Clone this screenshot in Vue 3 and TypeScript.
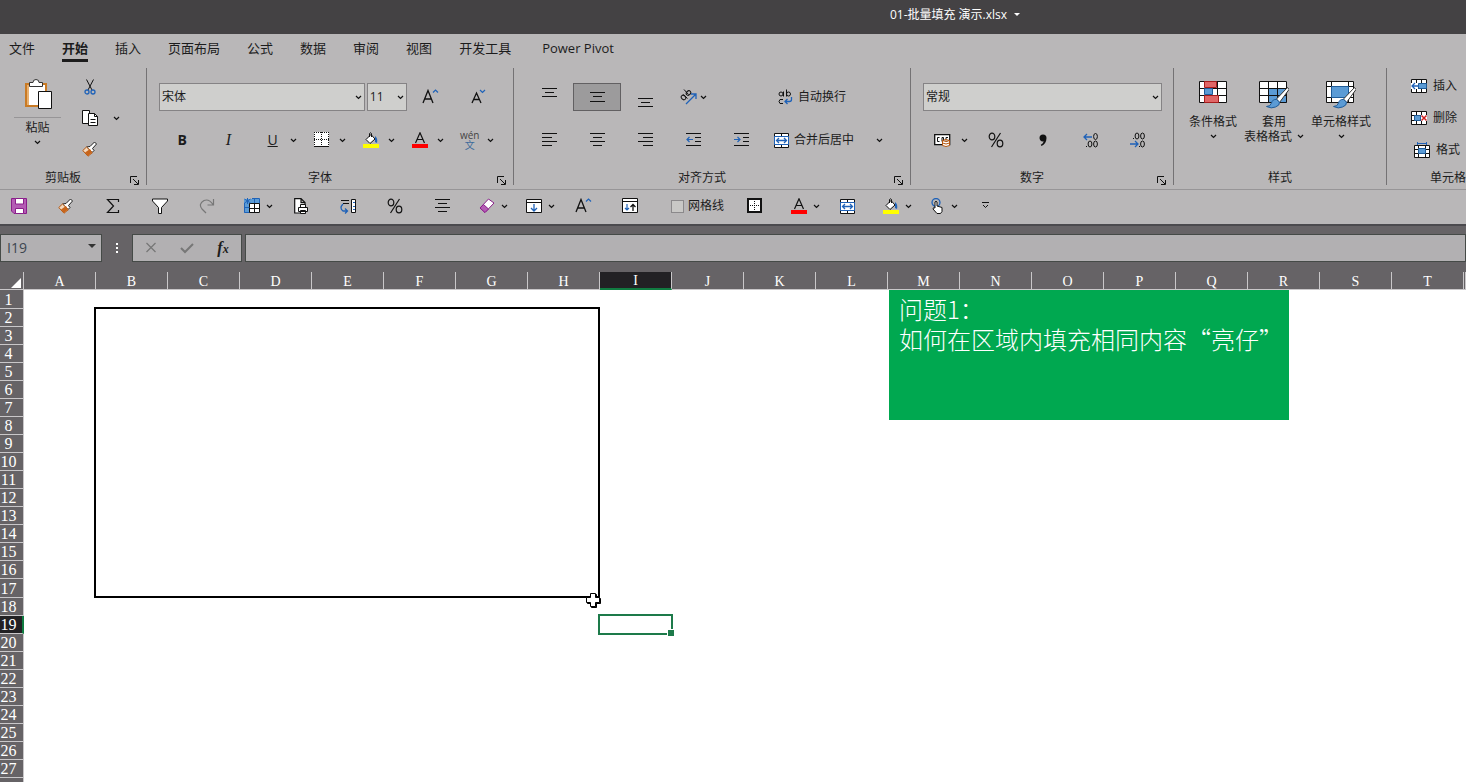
<script setup lang="ts">
import { computed, h, onBeforeUnmount, onMounted, ref } from 'vue'

interface Glyph { w: number; h: number; d: string }

const K = 'fill="none" stroke="#111"'
const B = 'fill="none" stroke="#1f62b8"'
const bars = (rows: number[][]): string =>
  rows.map(([x, y, w]) => `<path ${K} d="M${x} ${y}.5h${w}"/>`).join('')

const brush =
  `<path fill="#fff" stroke="#222" d="M8 5.5 12.5 1 14.5 3 10.5 7.5 12 9.5 10 11.5 4.5 6z"/><path fill="#f4d9bd" stroke="#b5560f" d="M4.5 6 .8 9.5 6 15.2 10.3 11.7z"/><path fill="#c8651b" d="M3 11.5 8 8l2 3.5L6 15z"/>`
const bucket =
  `<path fill="#fff" stroke="#111" d="M3 7.5 8 2.5 12 7 7 11.5z"/><path ${K} d="M6.5 5V1.5Q7.5 0 8.5 1.5V5"/><path fill="#1f62b8" d="M12 4q3 2 2 7l-2-1z"/><path fill="#ff0" d="M0 12h16v4H0z"/>`
const mergeIcon =
  `<path fill="#fff" stroke="#111" d="M.5.5h14v14H.5zM7.5.5v3M7.5 11.5v3"/><path fill="#fff" stroke="#1f62b8" d="M.5 3.5h14v8H.5z"/><path ${B} stroke-width="1.3" d="M2.5 7.5h10M5 5 2.5 7.5 5 10M10 5l2.5 2.5L10 10"/>`
const paintTip =
  `<path fill="#fff" stroke="#333" d="M28.500 6.500 17.500 18l3 3.500L30 8.500z"/><path fill="#5b9bd5" stroke="#1f5c99" d="M17.500 18.500q-4-.5-5 3.500-1 3.500-5 3.500 5 2.500 9 .5 4.500-1.500 4-5z"/>`
const grid28 = 'M.5.5h27v21H.5zM.5 7.5h27M.5 14.5h27M9.5.5v21M18.5.5v21'

const glyphs: Record<string, Glyph> = {
  chev: { w: 7, h: 5, d: `<path ${K} stroke-width="1.2" d="M1 1 3.500 3.500 6 1"/>` },
  launch: { w: 9, h: 9, d: `<path ${K} d="M.5 7V.5H7M3 3l5 5M8.500 4v4.500H4"/>` },
  paste: { w: 28, h: 31, d: `<path fill="#fff" stroke="#c97a24" stroke-width="2" d="M1 5h20v22H1z"/><path fill="#e8b070" d="M2 6h2v20H2z"/><path fill="#fff" stroke="#333" d="M4.500 7.500v-4H8a3 3 0 0 1 6 0h3.500v4z"/><path fill="#fff" stroke="#111" d="M13.500 12.500h13v17h-13z"/>` },
  cut: { w: 12, h: 16, d: `<path ${K} d="M2.500.5 8 11M9.500.5 4 11"/><circle cx="3" cy="13" r="2" ${B} stroke-width="1.300"/><circle cx="9" cy="13" r="2" ${B} stroke-width="1.300"/>` },
  copy: { w: 17, h: 17, d: `<path fill="#fff" stroke="#111" d="M.5.5h7v13h-7z"/><path fill="#fff" stroke="#111" d="M6.500 3.500h6l3 3v9h-9z"/><path ${K} d="M12.500 3.500v3h3M8.500 9.500h5M8.500 12.500h5"/>` },
  brush: { w: 16, h: 16, d: brush },
  borders: { w: 16, h: 16, d: `<path fill="#fff" d="M0 0h15v15H0z"/><path ${K} stroke-dasharray="1 1" d="M0 .5h15M0 7.500h15M.5 0v14M7.500 0v14M14.500 0v14"/><path ${K} d="M0 14.500h15"/>` },
  bucket: { w: 16, h: 16, d: bucket },
  fontcolor: { w: 16, h: 16, d: `<path ${K} stroke-width="1.200" d="M3.500 11 8 .8 12.500 11M5 7.500h6"/><path fill="#f00" d="M0 12h16v4H0z"/>` },
  grow: { w: 17, h: 16, d: `<path ${K} stroke-width="1.300" d="M1 14 6 1.500 11 14M3 10h6"/><path ${B} stroke-width="1.200" d="M11 3.500 13.500 1 16 3.500"/>` },
  shrink: { w: 15, h: 16, d: `<path ${K} stroke-width="1.300" d="M1 14 5.500 4 10 14M3 10.500h5"/><path ${B} stroke-width="1.200" d="M9 1 11.500 3.500 14 1"/>` },
  top: { w: 15, h: 20, d: bars([[0, 1, 15], [3, 5, 9], [0, 9, 15]]) },
  middle: { w: 15, h: 15, d: bars([[0, 2, 15], [3, 6, 9], [0, 11, 15]]) },
  bottom: { w: 15, h: 20, d: bars([[0, 11, 15], [3, 15, 9], [0, 19, 15]]) },
  left: { w: 15, h: 15, d: bars([[0, 0, 15], [0, 4, 10], [0, 8, 15], [0, 12, 10]]) },
  center: { w: 15, h: 15, d: bars([[0, 0, 15], [3, 4, 9], [0, 8, 15], [3, 12, 9]]) },
  right: { w: 15, h: 15, d: bars([[0, 0, 15], [5, 4, 10], [0, 8, 15], [5, 12, 10]]) },
  outdent: { w: 15, h: 15, d: bars([[0, 0, 15], [9, 4, 6], [9, 8, 6], [0, 12, 15]]) + `<path ${B} stroke-width="1.200" d="M7 6.500H1M3.500 4 1 6.500 3.500 9"/>` },
  indent: { w: 15, h: 15, d: bars([[0, 0, 15], [9, 4, 6], [9, 8, 6], [0, 12, 15]]) + `<path ${B} stroke-width="1.200" d="M0 6.500h6M3.500 4 6 6.500 3.500 9"/>` },
  orient: { w: 17, h: 16, d: `<g ${K}><ellipse cx="3.500" cy="8.500" rx="2" ry="2.500" transform="rotate(-45 3.500 8.500)"/><path d="m3.500 5.500 4 4"/><ellipse cx="8.500" cy="4" rx="2.500" ry="2" transform="rotate(-45 8.500 4)"/><path d="M4 .5 8.500 5.500"/></g><path ${B} stroke-width="1.300" d="M6 15 15.500 5.500M11 5h5v5"/>` },
  wrap: { w: 15, h: 16, d: `<g ${K}><ellipse cx="3" cy="5" rx="2" ry="2"/><path d="M5.500 2.500v5M8.500.5v7"/><circle cx="10.500" cy="5" r="2"/><path d="M5 10.500q-4-1-4 2t4 2"/></g><path ${B} stroke-width="1.300" d="M13.500 8v2.500q0 2-2 2H7M9.500 10 7 12.500 9.500 15"/>` },
  merge: { w: 15, h: 15, d: mergeIcon },
  money: { w: 17, h: 15, d: `<path fill="#fff" stroke="#111" stroke-width="1.300" d="M.7 1.700h15v10H.7z"/><path ${K} d="M5.500 4.500h-2v4h2M8 4.500h1.500v4H8zM14 4.500h-2v4h2"/><path fill="#fff" stroke="#b5560f" d="M8.500 7.500q3.500-2 7 0v5q-3.500 2-7 0zM8.500 7.500q3.500 2 7 0M8.500 10q3.500 2 7 0"/>` },
  percent: { w: 16, h: 16, d: `<g ${K} stroke-width="1.200"><ellipse cx="4" cy="4.500" rx="2.800" ry="3.300"/><ellipse cx="12" cy="11.500" rx="2.800" ry="3.300"/><path d="M12.500 1 3.500 15"/></g>` },
  comma: { w: 10, h: 14, d: `<path fill="#111" d="M1.500 5a3.500 3.500 0 1 1 7 0c0 4-2 6.500-5 8l-.7-1.200c1.700-1 2.700-2 2.700-3.500-2 .5-4-1-4-3.300z"/>` },
  moredec: { w: 16, h: 16, d: `<path ${B} stroke-width="1.300" d="M9 5H1M4 2 1 5l3 3"/><g ${K}><ellipse cx="12.500" cy="4.500" rx="1.900" ry="3"/><ellipse cx="7" cy="12" rx="1.900" ry="3"/><ellipse cx="12.500" cy="12" rx="1.900" ry="3"/><path d="M3 14.500h1"/></g>` },
  lessdec: { w: 16, h: 16, d: `<path ${B} stroke-width="1.300" d="M0 12h8M5 9l3 3-3 3"/><g ${K}><ellipse cx="7" cy="4" rx="1.900" ry="3"/><ellipse cx="12.500" cy="4" rx="1.900" ry="3"/><ellipse cx="12.500" cy="12" rx="1.900" ry="3"/><path d="M3 6.500h1M9 14.500h1"/></g>` },
  cond: { w: 28, h: 23, d: `<path fill="#fff" stroke="#111" d="${grid28}"/><path fill="#e06666" stroke="#a61c1c" d="M5.500.5h12v6h-12zM5.500 14.500h14v7h-14z"/><path fill="#5b9bd5" stroke="#1f5c99" d="M5.500 7.500h8v6h-8z"/>` },
  table: { w: 30, h: 28, d: `<path fill="#fff" d="M0 0h28v22H0z"/><path fill="#5b9bd5" d="M9 7h19v15H9z"/><path ${K} d="${grid28}"/>${paintTip}` },
  cellstyle: { w: 30, h: 28, d: `<path fill="#fff" stroke="#111" d="M.5.5h27v21H.5zM5.500.5v21M22.500.5v21M.5 5.500h27M.5 16.500h27"/><path fill="#5b9bd5" stroke="#1f5c99" d="M5.500 5.500h17v11h-17z"/>${paintTip}` },
  insert: { w: 16, h: 15, d: `<path fill="#fff" stroke="#111" d="M.5.500h15v13H.5zM5.500.5v13M10.500.5v13M.5 9.500h15"/><path fill="#5b9bd5" stroke="#1f5c99" d="M7.500 4.500h8v5h-8z"/><path fill="#fff" d="M0 4h7v6H0z"/><path ${B} stroke-width="1.300" d="M8 7H1M4 4 1 7l3 3"/>` },
  remove: { w: 16, h: 15, d: `<path fill="#fff" stroke="#111" d="M.5.500h15v13H.5zM5.500.5v13M10.500.5v13M.5 4.500h15M.5 9.500h15"/><path fill="#5b9bd5" stroke="#1f5c99" d="M3.500 4.500h6v5h-6z"/><path fill="#fff" d="M10 4h6v6h-6z"/><path fill="none" stroke="#d02020" stroke-width="1.500" d="m10.500 4.500 5 5M15.500 4.500l-5 5"/>` },
  format: { w: 16, h: 16, d: `<path fill="#fff" stroke="#111" d="M.5 3.500h15v12H.5zM4.500 3.500v12M11.500 3.500v12M.5 7.500h15M.5 11.500h15"/><path fill="#5b9bd5" stroke="#1f5c99" d="M4.500 6.500h7v5h-7z"/><path ${B} d="M3 1.500h10M3.500 0v3M12.500 0v3"/>` },
  save: { w: 16, h: 16, d: `<path fill="#b45cb4" stroke="#8a1f8a" d="M.5.5h15v15H3L.5 13z"/><path fill="#fff" stroke="#8a1f8a" d="M4.500.5h8v5.500h-8zM4.500 10.500h8v5h-8z"/>` },
  sum: { w: 14, h: 16, d: `<path ${K} stroke-width="1.200" d="M12.500 4V1.500h-11l6 6.500-6 6.500h11V12"/>` },
  filter: { w: 17, h: 17, d: `<path fill="#fff" stroke="#111" d="M.5 1v2l6 6.500v6h3v-6l6-6.500V1z"/>` },
  redo: { w: 16, h: 16, d: `<path fill="none" stroke="#777" stroke-width="1.200" d="M14.500 1v6h-6M14 6.500Q10 .5 5 2.500-1 6 3 11l4 4"/>` },
  freeze: { w: 17, h: 16, d: `<path fill="#5b9bd5" d="M0 1h16v14H0z"/><path fill="#fff" d="M6 6h10v9H6z"/><path ${K} d="M5.500 5.500h10v9h-10zM10.500 5.500v9M5.500 10.500h10"/><path ${B} d="M.5 5v9.500H5M8 .5h7.500V5M.5 9.500h5M10.500.5V5M3.500 0v6M.5 1l6 4M6.500 1l-6 4"/>` },
  preview: { w: 15, h: 16, d: `<path fill="#fff" stroke="#111" stroke-width="1.200" d="M.7.600H7l4 4V15H.7zM7 .6v4h4"/><path fill="#fff" stroke="#111" d="M4.500 9.500h9v4h-9zM6.500 6.500h5v3h-5zM6.500 12.500h5v3h-5z"/>` },
  cycle: { w: 17, h: 15, d: `<path ${K} d="M1 1.500h8M3 4.500h6"/><path fill="#fff" stroke="#111" d="M11.500.5h4v13h-4z"/><path ${B} d="M13 3.500h2M13 7.500h2M13 10.500h2"/><path ${B} stroke-width="1.300" d="M3 5q-4 4 0 7h4M5 9.500 7.500 12 5 14.500"/>` },
  eraser: { w: 16, h: 16, d: `<path fill="#fff" stroke="#8a1f8a" d="M9.500 1 15 5 6 14.500 1 10z"/><path fill="#b45cb4" stroke="#8a1f8a" d="M4.500 6.500 9.500 11 6 14.500 1 10z"/>` },
  down: { w: 17, h: 15, d: `<path fill="#fff" stroke="#111" d="M.5.5h15v13H.5zM.5 3.500h15"/><path ${B} stroke-width="1.300" d="M8 5v7M5 9l3 3 3-3"/>` },
  sort: { w: 17, h: 16, d: `<path fill="#fff" stroke="#111" d="M.5.5h15v14H.5zM.5 3.500h15"/><path ${B} stroke-width="1.200" d="M5 6v6M3 10l2 2 2-2"/><path ${K} stroke-width="1.300" d="M11 13V7M8.500 9 11 6.500 13.500 9"/>` },
  thick: { w: 16, h: 16, d: `<path fill="#fff" stroke="#111" stroke-width="2" d="M1 1h13v13H1z"/><path ${K} stroke-dasharray="1 1" d="M3 7.500h10M7.500 3v10"/>` },
  touch: { w: 13, h: 16, d: `<circle cx="5" cy="4.500" r="4" ${B} stroke-width="1.300"/><path fill="#fff" stroke="#111" d="M4 10V4q1-1.500 2 0v4l5 1.500v4l-1.500 2H6L2 11q0-2 2-1z"/>` },
  more: { w: 9, h: 10, d: `<path ${K} d="M1 1.500h7M2 4l2.500 2.500L7 4"/>` },
  cancel: { w: 13, h: 12, d: `<path fill="none" stroke="#777" stroke-width="1.300" d="m1.500 1 9 9M10.500 1l-9 9"/>` },
  ok: { w: 14, h: 12, d: `<path fill="none" stroke="#777" stroke-width="2" d="m1 6 4 4 8-8"/>` },
  drop: { w: 8, h: 8, d: `<path fill="#333" d="M0 0h8L4 4z"/>` },
  dropwhite: { w: 6, h: 4, d: `<path fill="#fff" d="M0 0h6L3 3z"/>` },
  cursor: { w: 15, h: 15, d: `<path d="M5.500 1.500h5v4h4v5h-4v4h-5v-4h-4v-5h4z" fill="#000" stroke="#000"/><path d="M4.500.5h5v4h4v5h-4v4h-5v-4h-4v-5h4z" fill="#fff" stroke="#000"/>` },
  corner: { w: 10, h: 10, d: `<path fill="#fff" d="M10 0v10H0z"/>` },
}

const Icon = (props: { name: string }) => {
  const g = glyphs[props.name]
  return h('svg', { width: g.w, height: g.h, viewBox: `0 0 ${g.w} ${g.h}`, 'aria-hidden': 'true', innerHTML: g.d })
}
Icon.props = ['name']

const tabs = ['文件', '开始', '插入', '页面布局', '公式', '数据', '审阅', '视图', '开发工具', 'Power Pivot']
const activeTab = ref('开始')
const fontSplits = [
  { icon: 'borders', label: '边框' },
  { icon: 'bucket', label: '填充颜色' },
  { icon: 'fontcolor', label: '字体颜色' },
]
const cellActions = [
  { icon: 'insert', label: '插入' },
  { icon: 'remove', label: '删除' },
  { icon: 'format', label: '格式' },
]
interface Quick { icon: string; label: string; split?: boolean }
const quickLeft: Quick[] = [
  { icon: 'save', label: '保存' }, { icon: 'brush', label: '格式刷' }, { icon: 'sum', label: '求和' },
  { icon: 'filter', label: '筛选' }, { icon: 'redo', label: '恢复' }, { icon: 'freeze', label: '冻结窗格', split: true },
  { icon: 'preview', label: '打印预览' }, { icon: 'cycle', label: '切换' }, { icon: 'percent', label: '百分比' },
  { icon: 'center', label: '居中' }, { icon: 'eraser', label: '清除', split: true }, { icon: 'down', label: '填充', split: true },
  { icon: 'grow', label: '增大字号' }, { icon: 'sort', label: '排序' },
]
const quickRight: Quick[] = [
  { icon: 'thick', label: '粗外框线' }, { icon: 'fontcolor', label: '字体颜色', split: true }, { icon: 'merge', label: '合并' },
  { icon: 'bucket', label: '填充颜色', split: true }, { icon: 'touch', label: '触摸模式', split: true }, { icon: 'more', label: '自定义' },
]
const gridlines = ref(false)
const cellName = ref('I19')
const formula = ref('')

const view = ref({ w: window.innerWidth, h: window.innerHeight })
const measure = () => { view.value = { w: window.innerWidth, h: window.innerHeight } }
onMounted(() => window.addEventListener('resize', measure))
onBeforeUnmount(() => window.removeEventListener('resize', measure))

const letters = (n: number): string =>
  n < 26 ? String.fromCharCode(65 + n) : letters(Math.floor(n / 26) - 1) + letters(n % 26)
const columns = computed(() =>
  Array.from({ length: Math.max(1, Math.floor((view.value.w - 24) / 72)) }, (_, i) => letters(i)))
const rowCount = computed(() => Math.max(1, Math.floor((view.value.h - 290) / 18)))
</script>

<template>
  <div class="app">
    <header class="title"><button>01-批量填充 演示.xlsx <Icon name="dropwhite" /></button></header>

    <nav class="tabs">
      <button v-for="t in tabs" :key="t" :class="{ active: t === activeTab }" @click="activeTab = t">{{ t }}</button>
    </nav>

    <section class="ribbon">
      <div class="group clipboard">
        <div class="body">
          <button class="paste"><Icon name="paste" /><span>粘贴</span><Icon name="chev" /></button>
          <div class="stack">
            <button aria-label="剪切"><i><Icon name="cut" /></i></button>
            <button aria-label="复制"><i><Icon name="copy" /></i><Icon name="chev" /></button>
            <button aria-label="格式刷"><i><Icon name="brush" /></i></button>
          </div>
        </div>
        <footer><span>剪贴板</span><button aria-label="剪贴板设置"><Icon name="launch" /></button></footer>
      </div>

      <div class="group font">
        <div class="rows">
          <div class="row">
            <label class="combo wide"><select aria-label="字体"><option>宋体</option></select><Icon name="chev" /></label>
            <label class="combo size"><select aria-label="字号"><option>11</option></select><Icon name="chev" /></label>
            <button class="tool" aria-label="增大字号"><Icon name="grow" /></button>
            <button class="tool" aria-label="减小字号"><Icon name="shrink" /></button>
          </div>
          <div class="row">
            <button class="tool letter"><b>B</b></button>
            <button class="tool letter"><em>I</em></button>
            <button class="split letter"><i><u>U</u></i><Icon name="chev" /></button>
            <button v-for="s in fontSplits" :key="s.icon" class="split" :aria-label="s.label"><i><Icon :name="s.icon" /></i><Icon name="chev" /></button>
            <button class="split"><i class="phonetic"><span>wén</span><span>文</span></i><Icon name="chev" /></button>
          </div>
        </div>
        <footer><span>字体</span><button aria-label="字体设置"><Icon name="launch" /></button></footer>
      </div>

      <div class="group align">
        <div class="rows">
          <div class="row">
            <button class="tool" aria-label="顶端对齐"><Icon name="top" /></button>
            <button class="tool pressed" aria-label="垂直居中"><Icon name="middle" /></button>
            <button class="tool" aria-label="底端对齐"><Icon name="bottom" /></button>
            <button class="tool pair" aria-label="方向"><Icon name="orient" /><Icon name="chev" /></button>
            <button class="text wraptext"><Icon name="wrap" />自动换行</button>
          </div>
          <div class="row">
            <button v-for="n in ['left', 'center', 'right', 'outdent', 'indent']" :key="n" class="tool" :aria-label="n"><Icon :name="n" /></button>
            <button class="text mergetext"><Icon name="merge" />合并后居中<Icon name="chev" class="far" /></button>
          </div>
        </div>
        <footer><span>对齐方式</span><button aria-label="对齐设置"><Icon name="launch" /></button></footer>
      </div>

      <div class="group number">
        <div class="rows">
          <div class="row">
            <label class="combo fill"><select aria-label="数字格式"><option>常规</option></select><Icon name="chev" /></label>
          </div>
          <div class="row">
            <button class="split money" aria-label="会计格式"><i><Icon name="money" /></i><Icon name="chev" /></button>
            <button v-for="n in ['percent', 'comma', 'moredec', 'lessdec']" :key="n" class="tool" :aria-label="n"><Icon :name="n" /></button>
          </div>
        </div>
        <footer><span>数字</span><button aria-label="数字设置"><Icon name="launch" /></button></footer>
      </div>

      <div class="group styles">
        <div class="body">
          <button class="large"><i><Icon name="cond" /></i><span>条件格式</span><Icon name="chev" class="low" /></button>
          <button class="large"><i><Icon name="table" /></i><span>套用</span><span>表格格式 <Icon name="chev" /></span></button>
          <button class="large"><i><Icon name="cellstyle" /></i><span>单元格样式</span><Icon name="chev" class="low" /></button>
        </div>
        <footer><span>样式</span></footer>
      </div>

      <div class="group cells">
        <div class="list">
          <button v-for="c in cellActions" :key="c.icon" class="text" :class="c.icon"><Icon :name="c.icon" />{{ c.label }}<Icon name="chev" class="menu" /></button>
        </div>
        <footer><span>单元格</span></footer>
      </div>
    </section>

    <section class="quick">
      <button v-for="q in quickLeft" :key="q.icon" :class="{ wider: q.split }" :aria-label="q.label"><i><Icon :name="q.icon" /></i><Icon v-if="q.split" name="chev" /></button>
      <label class="check"><input v-model="gridlines" type="checkbox" />网格线</label>
      <button v-for="q in quickRight" :key="q.icon" class="narrow" :class="{ wider: q.split }" :aria-label="q.label"><i><Icon :name="q.icon" /></i><Icon v-if="q.split" name="chev" /></button>
    </section>

    <section class="formula">
      <label class="namebox"><input v-model="cellName" aria-label="名称框" /><Icon name="drop" /></label>
      <span class="dots"><b></b><b></b><b></b></span>
      <div class="entry">
        <button aria-label="取消"><Icon name="cancel" /></button>
        <button aria-label="输入"><Icon name="ok" /></button>
        <button class="fx">f<small>x</small></button>
      </div>
      <input v-model="formula" class="expr" aria-label="编辑栏" />
    </section>

    <main class="sheet">
      <table>
        <thead>
          <tr>
            <th class="corner"><Icon name="corner" /></th>
            <th v-for="c in columns" :key="c" scope="col" :class="{ current: c === 'I' }">{{ c }}</th>
            <th class="rest"></th>
          </tr>
        </thead>
        <tbody>
          <tr v-for="r in rowCount" :key="r" :class="{ tall: r === 1 || r === 17 }">
            <th scope="row" :class="{ current: r === 19 }">{{ r }}</th>
            <td v-for="c in columns" :key="c"></td>
            <td></td>
          </tr>
          <tr><th></th></tr>
        </tbody>
      </table>
      <div class="range"></div>
      <div class="selection"></div>
      <div class="note">问题1：<br />如何在区域内填充相同内容“亮仔”</div>
      <Icon name="cursor" class="pointer" />
    </main>
  </div>
</template>

<style>
body { margin: 0; overflow: hidden; }
</style>

<style scoped>
.app {
  height: 100vh;
  display: flex;
  flex-direction: column;
  overflow: hidden;
  background: #666366;
  color: #1c1c1c;
  font: 12px/16px "Open Sans", "Noto Sans CJK SC", sans-serif;
}
.app * { box-sizing: border-box; }
svg { flex: none; display: block; }
button, select, input { font: inherit; color: inherit; margin: 0; padding: 0; border: 0; background: none; border-radius: 0; }
button { white-space: nowrap; }
i { font-style: normal; }

.title { height: 34px; flex: none; background: #444244; color: #fff; display: flex; justify-content: center; padding-left: 444px; }
.title button { display: flex; align-items: center; gap: 7px; height: 30px; }

.tabs { height: 34px; flex: none; display: flex; gap: 27px; padding-left: 9px; background: #b9b7b8; font-size: 13px; overflow: hidden; }
.tabs button { height: 28px; border-bottom: 3px solid transparent; line-height: 21px; padding-top: 4px; }
.tabs button.active { font-weight: 700; border-color: #1c1c1c; }
.tabs button:last-child { margin-left: 4px; }

.ribbon { height: 122px; flex: none; display: flex; background: #b9b7b8; border-bottom: 1px solid #979597; overflow: hidden; }
.group { flex: none; height: 117px; display: flex; flex-direction: column; border-right: 1px solid #747274; }
.body, .rows, .list { flex: 1; }
.body { display: flex; }
.clipboard { width: 147px; }
.font { width: 367px; }
.align { width: 397px; }
.number { width: 263px; }
.styles { width: 213px; }
.cells { width: 123px; }
footer { height: 14px; display: flex; align-items: center; text-align: center; }
footer span { flex: 1; }
footer button { width: 16px; height: 14px; margin-right: 4px; display: grid; place-items: end center; }

.paste { width: 47px; margin-left: 14px; padding-top: 11px; display: flex; flex-direction: column; align-items: center; }
.paste span { width: 100%; margin-top: 7px; border-top: 1px solid #979597; line-height: 20px; }
.paste svg:first-child { margin-left: 3px; }
.paste svg:last-child { margin-top: 2px; }
.stack { margin: 7px 0 0 18px; display: flex; flex-direction: column; gap: 7px; }
.stack button { display: flex; align-items: center; height: 24px; }
.stack i { width: 22px; display: grid; place-items: center; }
.stack i + svg { margin-left: 12px; }

.rows { display: flex; flex-direction: column; gap: 15px; padding: 15px 11px 0 12px; }
.align .rows { padding-left: 11px; }
.row { display: flex; height: 28px; align-items: center; }
.combo { display: grid; align-items: center; height: 28px; background: #cfcfcd; border: 1px solid #858385; }
.combo select { grid-area: 1 / 1; appearance: none; height: 26px; padding-left: 2px; outline: 0; }
.combo svg { grid-area: 1 / 1; justify-self: end; margin-right: 2px; pointer-events: none; }
.combo.wide { width: 207px; margin-right: 2px; }
.combo.size { width: 40px; }
.combo.fill { flex: 1; }
.tool { width: 48px; height: 28px; display: flex; align-items: center; justify-content: center; gap: 3px; }
.pressed { background: #9c9b9c; border: 1px solid #626062; }
.letter { font-size: 14px; }
.font .tool.letter { width: 47px; }
.letter em { font-family: "Liberation Serif", serif; font-size: 16px; }
.split { width: 50px; height: 28px; display: flex; align-items: center; }
.split i { width: 34px; display: grid; place-items: center; }
.split.letter { margin-left: 4px; }
.money i { width: 38px; }
.phonetic { font-size: 10px; line-height: 10px; color: #444; }
.phonetic span:last-child { color: #3d6b9c; }
.text { display: flex; align-items: center; gap: 5px; height: 20px; }
.wraptext { margin-left: 61px; }
.mergetext { margin-left: 9px; }
.far { margin-left: 17px; }

.styles .body { gap: 7px; padding-left: 15px; }
.large { padding-top: 13px; display: flex; flex-direction: column; align-items: center; line-height: 15px; }
.large i { height: 33px; }
.large span { display: flex; align-items: center; gap: 5px; }
.large .low { margin-top: 5px; }
.list { display: flex; flex-direction: column; gap: 12px; padding: 8px 0 0 24px; }
.list .text { gap: 6px; }
.list .text.format { margin-left: 3px; }
.menu { margin-left: 2px; }
.insert .menu, .remove .menu { margin-left: 5px; }

.quick { height: 34px; flex: none; display: flex; align-items: center; padding: 0 0 2px 8px; background: #b9b7b8; overflow: hidden; }
.quick button { flex: none; width: 47px; height: 28px; display: flex; align-items: center; }
.quick button.narrow { width: 46px; }
.quick i { width: 22px; display: grid; place-items: center; }
.quick .wider i { width: 18px; }
.quick .wider i + svg { margin-left: 5px; }
.check { width: 78px; flex: none; display: flex; align-items: center; gap: 4px; padding-left: 5px; }
.check input { appearance: none; width: 13px; height: 13px; border: 1px solid #8b898b; background: #c9c8c6; }
.check input:checked { background: #217346; }

.formula { height: 48px; flex: none; display: flex; align-items: center; border-top: 2px solid #4b4a4e; padding-bottom: 2px; }
.formula > label, .entry, .expr { height: 28px; background: #b2b0b2; border: 1px solid #454a47; }
.namebox { width: 102px; display: flex; align-items: center; padding: 0 5px 0 6px; font-size: 14px; color: #3d4650; }
.namebox input { flex: 1; min-width: 0; outline: 0; }
.dots { width: 30px; display: flex; flex-direction: column; align-items: center; gap: 2px; }
.dots b { width: 2px; height: 2px; background: #fff; }
.entry { width: 110px; display: grid; grid-template-columns: repeat(3, 1fr); place-items: center; margin-right: 3px; }
.fx { font: italic bold 16px/20px "Liberation Serif", serif; }
.fx small { font-size: 12px; }
.expr { flex: 1; padding: 0 6px; outline: 0; }

.sheet { flex: 1; position: relative; overflow: hidden; background: #fff; }
table { border-collapse: separate; border-spacing: 0; table-layout: fixed; width: 100%; }
th { height: 18px; padding: 0; background: #666366; color: #fff; border-right: 1px solid #c9c7c9; border-bottom: 1px solid #c9c7c9; font: 16px/17px "Liberation Serif", serif; overflow: hidden; }
td { padding: 0; }
thead th { width: 72px; font-size: 14px; line-height: 15px; padding-top: 2px; }
thead th.corner { width: 24px; padding: 0; }
thead th.rest { width: auto; }
.corner svg { margin: 4px 0 0 11px; }
tbody th { padding: 1px 6px 0 0; line-height: 16px; }
.tall th { height: 19px; }
th.current { background: #222124; }
thead th.current { border-bottom: 2px solid #107c41; line-height: 14px; }
tbody th.current { border-right: 2px solid #107c41; padding-right: 5px; }
.range { position: absolute; left: 94px; top: 35px; width: 506px; height: 291px; border: 2px solid #000; }
.selection { position: absolute; left: 598px; top: 342px; width: 75px; height: 21px; border: 2px solid #1d7a4a; }
.selection::after { content: ""; position: absolute; right: -3px; bottom: -3px; width: 6px; height: 6px; background: #1d7a4a; border: solid #fff; border-width: 1px 0 0 1px; }
.note { position: absolute; left: 889px; top: 18px; width: 400px; height: 130px; padding: 4px 10px; background: #00a850; color: #fff; font: 300 24px/30px "Noto Sans CJK SC", sans-serif; white-space: nowrap; }
.pointer { position: absolute; left: 586px; top: 321px; }
</style>
